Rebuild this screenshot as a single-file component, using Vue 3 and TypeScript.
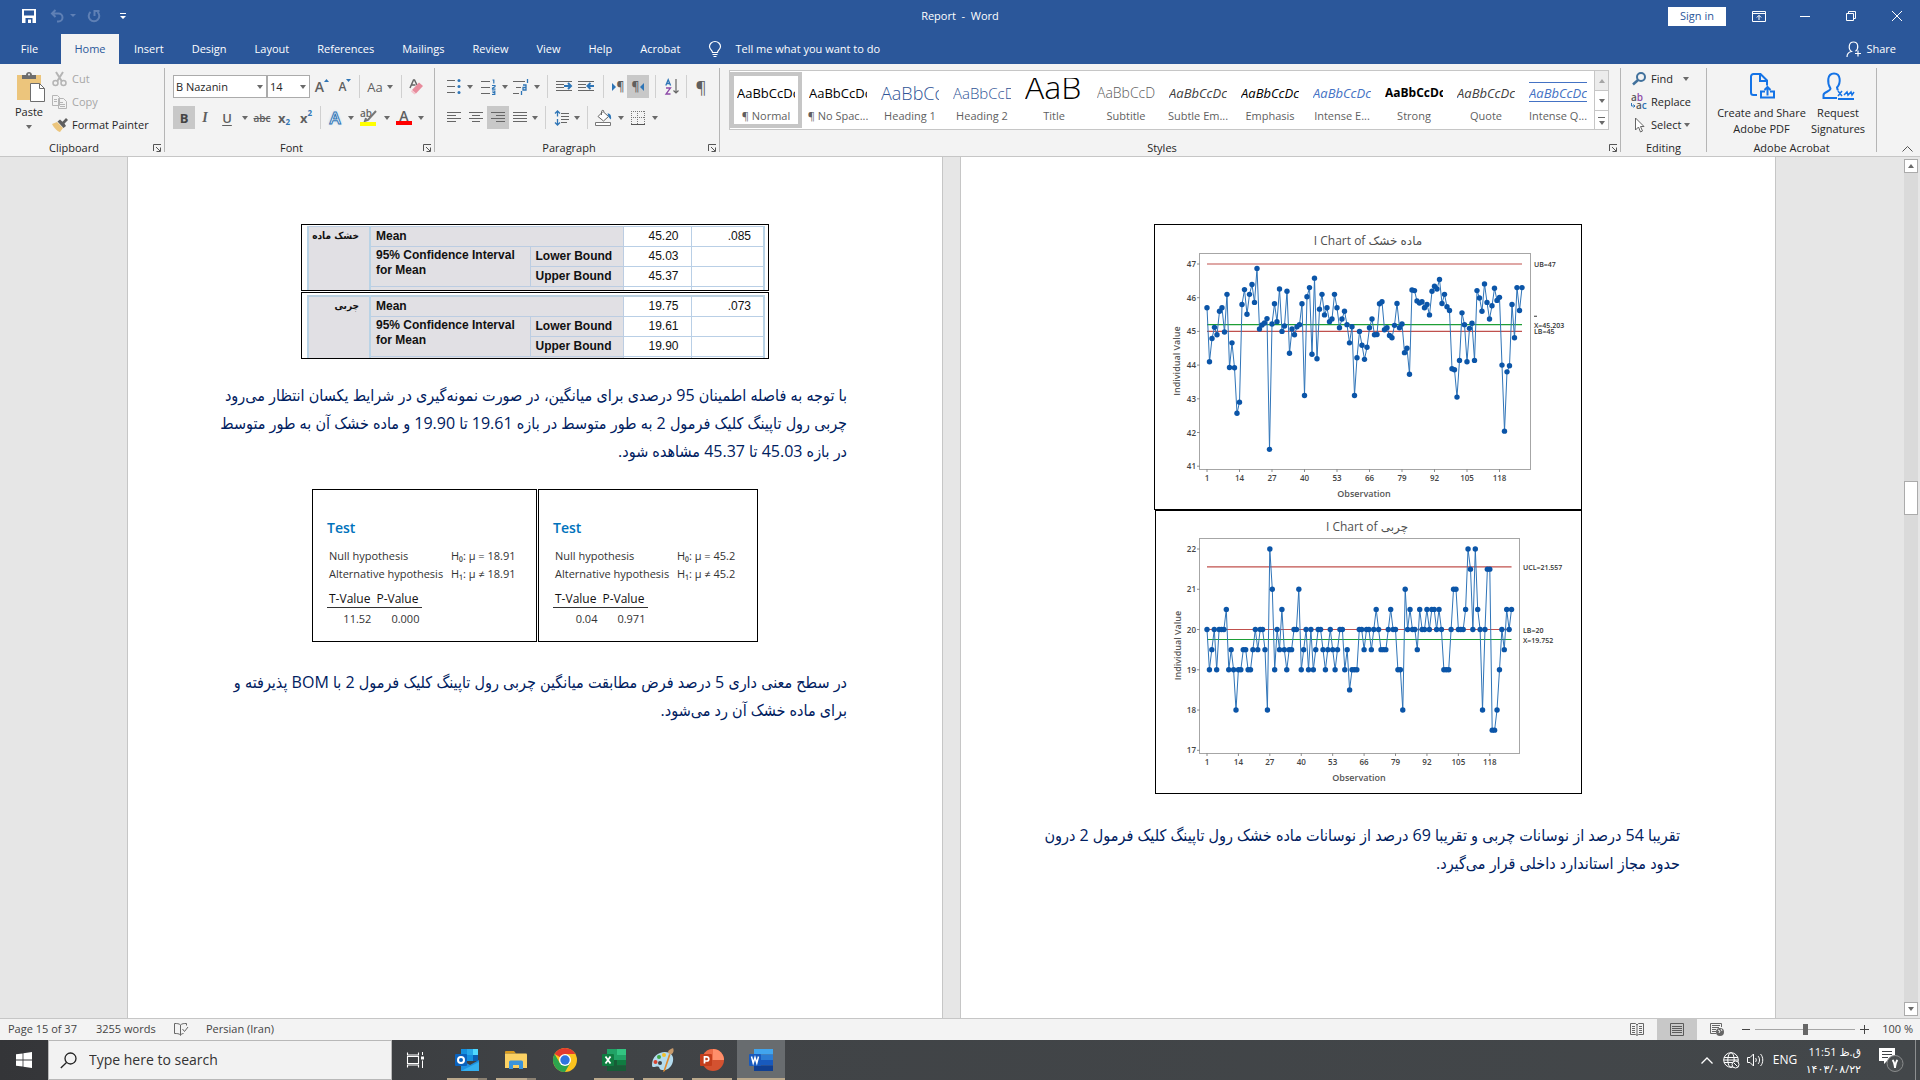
<script setup lang="ts">
interface StyleItem { name: string; cls: string }
interface Chart {
  id: string; title: string; w: number; h: number
  left: number; top: number; right: number; bottom: number
  x0: number; dx: number; yTop: number; dy: number; max: number
  ticks: number[]; titleX: number; obsX: number
  lines: { v: number; color: string; label: string }[]
  xbar: boolean
  data: number[]
}

const tabs = ['Insert', 'Design', 'Layout', 'References', 'Mailings', 'Review', 'View', 'Help', 'Acrobat']

const styleItems: StyleItem[] = [
  { name: '¶ Normal', cls: 'normal' },
  { name: '¶ No Spac...', cls: 'normal' },
  { name: 'Heading 1', cls: 'h1' },
  { name: 'Heading 2', cls: 'h2' },
  { name: 'Title', cls: 'title' },
  { name: 'Subtitle', cls: 'subtitle' },
  { name: 'Subtle Em...', cls: 'subtle' },
  { name: 'Emphasis', cls: 'emphasis' },
  { name: 'Intense E...', cls: 'intense' },
  { name: 'Strong', cls: 'strong' },
  { name: 'Quote', cls: 'subtle' },
  { name: 'Intense Q...', cls: 'intense quote' },
]

const stats = [
  { label: 'خشک ماده', mean: '45.20', err: '.085', lower: '45.03', upper: '45.37' },
  { label: 'چربی', mean: '19.75', err: '.073', lower: '19.61', upper: '19.90' },
]

const tests = [
  { mu: '18.91', t: '11.52', p: '0.000' },
  { mu: '45.2', t: '0.04', p: '0.971' },
]

const intervalText = [
  'با توجه به فاصله اطمینان 95 درصدی برای میانگین، در صورت نمونه‌گیری در شرایط یکسان انتظار می‌رود',
  'چربی رول تاپینگ کلیک فرمول 2 به طور متوسط در بازه 19.61 تا 19.90 و ماده خشک آن به طور متوسط',
  'در بازه 45.03 تا 45.37 مشاهده شود.',
]
const testText = [
  'در سطح معنی داری 5 درصد فرض مطابقت میانگین چربی رول تاپینگ کلیک فرمول 2 با BOM پذیرفته و',
  'برای ماده خشک آن رد می‌شود.',
]
const limitText = [
  'تقریبا 54 درصد از نوسانات چربی و تقریبا 69 درصد از نوسانات ماده خشک رول تاپینگ کلیک فرمول 2 درون',
  'حدود مجاز استاندارد داخلی قرار می‌گیرد.',
]

const xTicks = [1, 14, 27, 40, 53, 66, 79, 92, 105, 118]

const dryMatter = [
  45.7, 44.1, 44.79, 45.12, 44.9, 45.6, 45.7, 44.98, 46.1, 43.93, 44.66, 43.92, 42.57, 42.9, 45.8, 46.24,
  45.51, 46.1, 46.39, 45.86, 46.87, 45.07, 45.19, 45.25, 45.38, 41.5, 45.22, 45.82, 45.29, 46.26, 45.0, 45.16,
  46.19, 44.35, 45.07, 44.9, 45.14, 45.2, 45.82, 43.1, 46.03, 46.3, 44.32, 46.58, 44.19, 45.66, 46.1, 45.49,
  45.7, 45.29, 45.37, 46.1, 45.7, 45.11, 45.37, 45.6, 45.2, 44.66, 45.14, 43.1, 44.22, 45.0, 44.59, 44.17,
  44.53, 45.11, 45.37, 44.9, 44.91, 45.82, 45.88, 45.05, 45.11, 44.88, 44.81, 45.18, 45.83, 45.11, 45.22, 44.37,
  44.5, 43.73, 46.23, 46.21, 45.9, 45.84, 45.88, 45.7, 45.8, 45.49, 46.19, 46.34, 46.26, 46.54, 45.83, 46.1,
  45.73, 45.62, 43.89, 43.86, 43.05, 44.14, 45.55, 45.2, 44.1, 45.09, 45.24, 44.14, 46.21, 45.99, 45.6, 46.41,
  45.86, 45.37, 45.76, 46.28, 45.92, 46.01, 44.0, 42.04, 43.8, 43.98, 45.8, 44.81, 46.3, 45.62, 46.3,
]

const fat = [
  20, 19, 19.5, 20, 19, 20, 20, 20, 20.5, 19, 19.5, 19, 18, 19, 19, 19.5,
  19.5, 19, 19, 19.5, 20, 19.5, 20, 20, 19.5, 18, 22, 21, 19, 20, 19.5, 20.5,
  19.5, 19, 19.5, 19.5, 20, 20, 21, 19, 19.5, 20, 19, 20, 19, 19.5, 20, 20,
  19.5, 19, 19.5, 20, 19.5, 19, 19.5, 20, 20, 19, 19.5, 18.5, 19, 19, 19, 20,
  20, 19.5, 20, 20, 19.5, 20, 20.5, 20, 19.5, 19.5, 19.5, 20, 20.5, 20, 20, 19,
  19, 18, 21, 20, 20.5, 20, 20, 19.5, 20.5, 20, 20, 20.5, 20, 20.5, 20.5, 20,
  20.5, 20, 19, 19, 19, 20, 21, 21, 20, 20, 20, 20.5, 22, 21.5, 20, 22,
  20.5, 20, 18, 20, 21.5, 21.5, 17.5, 17.5, 18, 19, 20, 19.5, 20.5, 20, 20.5,
]

const charts: Chart[] = [
  {
    id: 'dry', title: 'I Chart of ماده خشک', w: 426, h: 284,
    left: 44, top: 28, right: 375, bottom: 244,
    x0: 52, dx: 2.5, yTop: 39, dy: 33.7, max: 47,
    ticks: [47, 46, 45, 44, 43, 42, 41], titleX: 213, obsX: 209,
    lines: [
      { v: 47, color: '#c0504d', label: 'UB=47' },
      { v: 45.203, color: '#1e9e36', label: 'X=45.203' },
      { v: 45, color: '#c0504d', label: 'LB=45' },
    ],
    xbar: true, data: dryMatter,
  },
  {
    id: 'fat', title: 'I Chart of چربی', w: 425, h: 282,
    left: 43, top: 27, right: 363, bottom: 242,
    x0: 51, dx: 2.417, yTop: 38, dy: 40.26, max: 22,
    ticks: [22, 21, 20, 19, 18, 17], titleX: 211, obsX: 203,
    lines: [
      { v: 21.557, color: '#c0504d', label: 'UCL=21.557' },
      { v: 20, color: '#c0504d', label: 'LB=20' },
      { v: 19.752, color: '#1e9e36', label: 'X=19.752' },
    ],
    xbar: false, data: fat,
  },
]

const px = (c: Chart, obs: number): number => c.x0 + (obs - 1) * c.dx
const py = (c: Chart, v: number): number => c.yTop + (c.max - v) * c.dy
const points = (c: Chart): string =>
  c.data.map((v, i) => `${px(c, i + 1).toFixed(1)},${py(c, v).toFixed(1)}`).join(' ')
</script>

<template>
  <div class="window">
    <header class="titlebar">
      <div class="qat">
        <button class="q-save" aria-label="Save">
          <svg width="14" height="14" viewBox="0 0 14 14"><path d="M0 0h14v14H0z" fill="#fff" /><path d="M2 1.500h10v5H2zM3.500 9h7v5h-7z" fill="#2b579a" /><path d="M6 10.500h3V14H6z" fill="#fff" /></svg>
        </button>
        <button class="q-undo" aria-label="Undo">
          <svg width="26" height="14" viewBox="0 0 26 14"><path d="M5.500 1L2 4.500 5.500 8M2 4.500h6.500a4 4 0 0 1 0 8H7" fill="none" stroke="#5f80b5" stroke-width="2" /><path d="M20 5h6l-3 3z" fill="#5f80b5" /></svg>
        </button>
        <button class="q-redo" aria-label="Repeat">
          <svg width="14" height="14" viewBox="0 0 14 14"><path d="M3.500 3A5.300 5.300 0 1 0 10.500 3M7.500 7V2h5" fill="none" stroke="#5f80b5" stroke-width="2" /></svg>
        </button>
        <button class="q-more" aria-label="Customize Quick Access Toolbar">
          <svg width="6" height="7" viewBox="0 0 6 7"><path d="M0 0h6v1H0zM0 3h6L3 6z" fill="#fff" /></svg>
        </button>
      </div>
      <div class="doc-title">Report&nbsp; -&nbsp; Word</div>
      <div class="win-tools">
        <button class="signin">Sign in</button>
        <button class="win-btn" aria-label="Ribbon Display Options">
          <svg width="14" height="11" viewBox="0 0 14 11"><path d="M.5.5h13v10H.5zM.5 2.500h13M7 9V4.500M4.800 6.500L7 4.300l2.200 2.200" fill="none" stroke="#fff" /></svg>
        </button>
        <button class="win-btn" aria-label="Minimize">
          <svg width="10" height="10" viewBox="0 0 10 10"><path d="M0 5.500h10" stroke="#fff" /></svg>
        </button>
        <button class="win-btn" aria-label="Restore">
          <svg width="10" height="10" viewBox="0 0 10 10"><path d="M.5 2.500h7v7h-7zM2.500 2.500v-2h7v7h-2" fill="none" stroke="#fff" /></svg>
        </button>
        <button class="win-btn" aria-label="Close">
          <svg width="10" height="10" viewBox="0 0 10 10"><path d="M0 0l10 10M10 0L0 10" stroke="#fff" /></svg>
        </button>
      </div>
    </header>

    <nav class="tabs">
      <button class="tab file">File</button>
      <button class="tab active">Home</button>
      <button v-for="t in tabs" :key="t" class="tab">{{ t }}</button>
      <button class="tab tell">
        <svg width="12" height="16" viewBox="0 0 12 16"><path d="M3.500 11.500C3.500 9 .5 8.500.5 5.500a5.500 5 0 0 1 11 0c0 3-3 3.500-3 6zM3.500 13.500h5M4.500 15.500h3" fill="none" stroke="#fff" stroke-width="1.200" /></svg>
        <span>Tell me what you want to do</span>
      </button>
      <button class="share">
        <svg width="16" height="17" viewBox="0 0 16 17"><path d="M1 16c0-4 2-5 4.500-5.500C2 8 2.500 1 7.500 1S13 7.500 9.500 10.200M12 9.500v6M9 12.500h6" fill="none" stroke="#fff" stroke-width="1.200" /></svg>
        <span>Share</span>
      </button>
    </nav>

    <section class="ribbon">
      <div class="group clipboard">
        <div class="group-body">
          <button class="paste">
            <svg width="28" height="30" viewBox="0 0 28 30"><path d="M0 3h24v25H0z" fill="#ecc57c" /><path d="M5 7V3h4c0-4 6-4 6 0h4v4z" fill="#6d6d6d" /><circle cx="12" cy="2.500" r="1" fill="#f3f3f3" /><path d="M13.500 11.500h9l5 5v13h-14z" fill="#fff" stroke="#6d6d6d" /><path d="M22.500 11.500v5h5" fill="none" stroke="#6d6d6d" /></svg>
            <span>Paste</span>
            <i class="caret"></i>
          </button>
          <div class="small-col">
            <button class="small off">
              <svg width="16" height="16" viewBox="0 0 16 16"><path d="M4 1l6 9.500M11 1L5 10.500" stroke="#b5b5b5" stroke-width="2" /><circle cx="3.500" cy="12" r="2.500" fill="none" stroke="#b5b5b5" stroke-width="1.500" /><circle cx="11.500" cy="12" r="2.500" fill="none" stroke="#b5b5b5" stroke-width="1.500" /></svg>
              <span>Cut</span>
            </button>
            <button class="small off">
              <svg width="16" height="16" viewBox="0 0 16 16"><path d="M.5 1.500h5l2 2v8h-7zM6.500 4.500h5l3 3v7h-8z" fill="#f3f3f3" stroke="#b5b5b5" /><path d="M2 5.500h3M2 7.500h3M8 8.500h3M8 10.500h5M8 12.500h5" stroke="#b5b5b5" /></svg>
              <span>Copy</span>
            </button>
            <button class="small">
              <svg width="16" height="16" viewBox="0 0 16 16"><path d="M0 7l5-2 6 6-3 4c-2 0-6-4-8-8z" fill="#ecc57c" /><path d="M5.500 4.500L8 2.500l2.500 2.300L14 1l2 2-3.500 3.500L14 9l-2.500 2z" fill="#5f5f5f" /></svg>
              <span>Format Painter</span>
            </button>
          </div>
        </div>
        <div class="group-foot"><span>Clipboard</span><button class="launch" aria-label="Clipboard settings"><svg width="8" height="8" viewBox="0 0 8 8"><path d="M.5 7V.5H8M3 3l4 4M7.500 3.500v4h-4" fill="none" stroke="#555" /></svg></button></div>
      </div>
      <div class="rule"></div>

      <div class="group font">
        <div class="group-body stack">
          <div class="tool-row">
            <label class="combo name"><select aria-label="Font"><option>B Nazanin</option></select><i class="caret"></i></label>
            <label class="combo size"><select aria-label="Font size"><option>14</option></select><i class="caret"></i></label>
            <button class="t w24 grow">A<svg width="5" height="3" viewBox="0 0 5 3"><path d="M0 3l2.500-3L5 3z" fill="#2e75b6" /></svg></button>
            <button class="t w22 shrink">A<svg width="5" height="3" viewBox="0 0 5 3"><path d="M0 0h5L2.500 3z" fill="#2e75b6" /></svg></button>
            <i class="vsep"></i>
            <button class="t w36 case">Aa<i class="caret"></i></button>
            <i class="vsep"></i>
            <button class="t w26" aria-label="Clear formatting">
              <svg width="16" height="16" viewBox="0 0 16 16"><path d="M1 9L4.500 1h1L8 6M2.500 6h4" fill="none" stroke="#666" stroke-width="1.500" /><path d="M10 3.500l4 3.500-7 7.500-4-3.500z" fill="#e88b9c" /><path d="M3 11l4 3.500-1.500 1-3.500-3z" fill="#f4c2cb" /></svg>
            </button>
          </div>
          <div class="tool-row">
            <button class="t w22 on bold">B</button>
            <button class="t w20 ital">I</button>
            <button class="t w24 under">U</button>
            <button class="t w12" aria-label="Underline style"><i class="caret"></i></button>
            <button class="t w22 strike">abc</button>
            <button class="t w22 subs">x<sub>2</sub></button>
            <button class="t w22 subs">x<sup>2</sup></button>
            <i class="vsep"></i>
            <button class="t w24 effect">A</button><button class="t w8" aria-label="Text effects menu"><i class="caret"></i></button>
            <button class="t w28" aria-label="Text highlight color">
              <svg width="18" height="17" viewBox="0 0 18 17"><text x="0" y="8" font-size="10" font-weight="600" fill="#666" font-family="Open Sans, sans-serif">ab</text><path d="M16 2L8 11l-3 1 1-3" fill="none" stroke="#777" stroke-width="2" /><path d="M0 13h16v4H0z" fill="#ff0" /></svg>
            </button><button class="t w8" aria-label="Highlight menu"><i class="caret"></i></button>
            <button class="t w26 colour">A</button><button class="t w8" aria-label="Font color menu"><i class="caret"></i></button>
          </div>
        </div>
        <div class="group-foot"><span>Font</span><button class="launch" aria-label="Font settings"><svg width="8" height="8" viewBox="0 0 8 8"><path d="M.5 7V.5H8M3 3l4 4M7.500 3.500v4h-4" fill="none" stroke="#555" /></svg></button></div>
      </div>
      <div class="rule"></div>

      <div class="group para">
        <div class="group-body stack">
          <div class="tool-row">
            <button class="t w22" aria-label="Bullets"><svg width="14" height="15" viewBox="0 0 14 15"><path d="M0 1.500h8M0 7.500h8M0 13.500h8" stroke="#666" /><g fill="#2e75b6"><circle cx="12" cy="1.500" r="1.500" /><circle cx="12" cy="7.500" r="1.500" /><circle cx="12" cy="13.500" r="1.500" /></g></svg></button>
            <button class="t w10" aria-label="Bullets menu"><i class="caret"></i></button>
            <button class="t w26" aria-label="Numbering"><svg width="15" height="16" viewBox="0 0 15 16"><path d="M0 2.500h9M0 8.500h9M0 14.500h9" stroke="#666" /><g fill="none" stroke="#2e75b6" stroke-width="1.200"><path d="M11.500 1h1.300v3.500M11 6.500h3v1.200l-2.500 1.500v1h3M11 12h2.800v3.500H11M11.500 13.700h2" /></g></svg></button>
            <button class="t w8" aria-label="Numbering menu"><i class="caret"></i></button>
            <button class="t w24" aria-label="Multilevel list"><svg width="16" height="16" viewBox="0 0 16 16"><path d="M0 2.500h12M3 8.500h5M0 14.500h6" stroke="#666" /><g fill="none" stroke="#2e75b6" stroke-width="1.300"><path d="M14.500 0v4M10 6h3v5h-3V8.500h3M8.500 12v4" /></g></svg></button>
            <button class="t w8" aria-label="Multilevel menu"><i class="caret"></i></button>
            <i class="vsep wide"></i>
            <button class="t w22" aria-label="Decrease indent"><svg width="16" height="11" viewBox="0 0 16 11"><path d="M0 .5h16M0 3.500h8M0 6.500h8M0 9.500h16" stroke="#666" /><path d="M8 5h7M12 2l3 3-3 3" fill="none" stroke="#2e75b6" stroke-width="2" /></svg></button>
            <button class="t w22" aria-label="Increase indent"><svg width="16" height="12" viewBox="0 0 16 12"><path d="M0 .5h16M0 3.500h8M0 6.500h8M0 9.500h16" stroke="#666" /><path d="M16 5h-6M12.500 2l-3 3 3 3" fill="none" stroke="#2e75b6" stroke-width="2" /></svg></button>
            <i class="vsep wide"></i>
            <button class="t w18 pil" aria-label="Left-to-right"><svg width="4" height="8" viewBox="0 0 4 8"><path d="M0 0l4 4-4 4z" fill="#2e75b6" /></svg>¶</button>
            <button class="t w22 on pil" aria-label="Right-to-left">¶<svg width="4" height="8" viewBox="0 0 4 8"><path d="M4 0L0 4l4 4z" fill="#2e75b6" /></svg></button>
            <i class="vsep wide"></i>
            <button class="t w22" aria-label="Sort"><svg width="15" height="16" viewBox="0 0 15 16"><path d="M.8 6.500L3.200.800l2.400 5.700M1.500 4.500h3.400" fill="none" stroke="#2e75b6" stroke-width="1.300" /><path d="M1 9h4.500L1 15h4.500" fill="none" stroke="#8e4ba8" stroke-width="1.300" /><path d="M11 0v14M8.500 11.500L11 14l2.500-2.500" fill="none" stroke="#666" stroke-width="1.200" /></svg></button>
            <i class="vsep"></i>
            <button class="t w24 pilcrow" aria-label="Show formatting marks">¶</button>
          </div>
          <div class="tool-row">
            <button class="t w22" aria-label="Align left"><svg width="14" height="11" viewBox="0 0 14 11"><path d="M0 .5h14M0 3.500h9M0 6.500h14M0 9.500h9" stroke="#666" /></svg></button>
            <button class="t w22" aria-label="Center"><svg width="14" height="11" viewBox="0 0 14 11"><path d="M0 .5h14M3 3.500h8M0 6.500h14M3 9.500h8" stroke="#666" /></svg></button>
            <button class="t w22 on" aria-label="Align right"><svg width="14" height="11" viewBox="0 0 14 11"><path d="M0 .5h14M5 3.500h9M0 6.500h14M5 9.500h9" stroke="#666" /></svg></button>
            <button class="t w22" aria-label="Justify"><svg width="14" height="11" viewBox="0 0 14 11"><path d="M0 .5h14M0 3.500h14M0 6.500h14M0 9.500h14" stroke="#666" /></svg></button>
            <button class="t w8" aria-label="Justify menu"><i class="caret"></i></button>
            <i class="vsep wide"></i>
            <button class="t w22" aria-label="Line spacing"><svg width="14" height="16" viewBox="0 0 14 16"><path d="M6 3.500h8M6 6.500h8M6 9.500h8M6 12.500h6" stroke="#666" /><path d="M2.500 1v5.500M0 3.500L2.500 1 5 3.500M2.500 9v6M0 12.500L2.500 15 5 12.500" fill="none" stroke="#2e75b6" stroke-width="1.300" /></svg></button>
            <button class="t w8" aria-label="Line spacing menu"><i class="caret"></i></button>
            <i class="vsep wide"></i>
            <button class="t w22" aria-label="Shading"><svg width="18" height="16" viewBox="0 0 18 16"><path d="M3 6.500l5-5 5.500 5-5 4.500zM6.500 5V1.500C6.500 0 9 0 9 1.500" fill="#fff" stroke="#666" /><path d="M12.500 3.500c2.500 0 4 1.500 3.500 6-1.500-1-2-2-2.500-3z" fill="#2e75b6" /><path d="M.5 12.500h15v3H.5z" fill="#fff" stroke="#777" /></svg></button>
            <button class="t w12" aria-label="Shading menu"><i class="caret"></i></button>
            <button class="t w22" aria-label="Borders"><svg width="14" height="14" viewBox="0 0 14 14"><path d="M0 .5h14M.5 0v13M13.500 0v13M6.500 0v13M0 6.500h14" stroke="#777" stroke-dasharray="1 1" /><path d="M0 13.500h14" stroke="#555" /></svg></button>
            <button class="t w12" aria-label="Borders menu"><i class="caret"></i></button>
          </div>
        </div>
        <div class="group-foot"><span>Paragraph</span><button class="launch" aria-label="Paragraph settings"><svg width="8" height="8" viewBox="0 0 8 8"><path d="M.5 7V.5H8M3 3l4 4M7.500 3.500v4h-4" fill="none" stroke="#555" /></svg></button></div>
      </div>
      <div class="rule"></div>

      <div class="group styles">
        <div class="group-body">
          <div class="gallery">
            <button v-for="(s, i) in styleItems" :key="s.name" class="style-item" :class="{ picked: i === 0 }">
              <span class="sample" :class="s.cls">AaBbCcDc</span>
              <span class="style-name">{{ s.name }}</span>
            </button>
            <div class="gallery-nav">
              <button class="dim" aria-label="Previous styles"><i class="caret up"></i></button>
              <button aria-label="Next styles"><i class="caret"></i></button>
              <button class="more" aria-label="More styles"><i class="caret"></i></button>
            </div>
          </div>
        </div>
        <div class="group-foot"><span>Styles</span><button class="launch" aria-label="Styles settings"><svg width="8" height="8" viewBox="0 0 8 8"><path d="M.5 7V.5H8M3 3l4 4M7.500 3.500v4h-4" fill="none" stroke="#555" /></svg></button></div>
      </div>
      <div class="rule"></div>

      <div class="group editing">
        <div class="group-body">
          <div class="small-col">
            <button class="small">
              <svg width="16" height="14" viewBox="0 0 16 14"><circle cx="10" cy="5" r="4" fill="none" stroke="#41719c" stroke-width="2" /><path d="M7 8l-5 4.500" stroke="#41719c" stroke-width="2.500" /></svg>
              <span>Find</span><i class="caret far"></i>
            </button>
            <button class="small">
              <svg width="16" height="16" viewBox="0 0 16 16"><text x="0" y="7" font-size="10" font-weight="600" font-family="Open Sans, sans-serif" fill="#555">a<tspan fill="#8e4ba8">b</tspan></text><text x="5" y="15" font-size="10" font-weight="600" font-family="Open Sans, sans-serif" fill="#555">a<tspan fill="#2e75b6">c</tspan></text><path d="M.5 9v3H4M2.500 10.500L4 12l-1.500 1.500" fill="none" stroke="#2e75b6" /></svg>
              <span>Replace</span>
            </button>
            <button class="small">
              <svg width="16" height="16" viewBox="0 0 16 16"><path d="M4.500 1v12l3-3 2 5 2-1-2-4.500h3.500z" fill="#fff" stroke="#666" /></svg>
              <span>Select</span><i class="caret near"></i>
            </button>
          </div>
        </div>
        <div class="group-foot"><span>Editing</span></div>
      </div>
      <div class="rule"></div>

      <div class="group adobe">
        <div class="group-body">
          <button class="big create">
            <svg width="26" height="27" viewBox="0 0 26 27"><path d="M8 22.500H4.500a2.500 2.500 0 0 1-2.500-2.500V4a2.500 2.500 0 0 1 2.500-2.500h7L18 8v5M11 2v6.500h7M16 19h-4v6h13v-6h-4M18.500 23V15M15.500 17.500l3-3 3 3" fill="none" stroke="#1473e6" stroke-width="2" /></svg>
            <span>Create and Share<br>Adobe PDF</span>
          </button>
          <button class="big request">
            <svg width="32" height="28" viewBox="0 0 32 28"><path d="M15 26H1.500v-3c0-3 7-3.500 7-6.500C5 11 5 1.500 12 1.500S19 11 15 15.500c0 1 0 2 1.500 2.500M16 27h16" fill="none" stroke="#1473e6" stroke-width="2" /><path d="M16 19l4 5M20 19l-4 5M22 23l3-3 1 3 3-3 1 3 2-3" fill="none" stroke="#1473e6" stroke-width="1.500" /></svg>
            <span>Request<br>Signatures</span>
          </button>
        </div>
        <div class="group-foot"><span>Adobe Acrobat</span></div>
      </div>
      <div class="rule"></div>
      <button class="collapse" aria-label="Collapse the Ribbon"><svg width="11" height="6" viewBox="0 0 11 6"><path d="M.5 5.500l5-5 5 5" fill="none" stroke="#555" /></svg></button>
    </section>

    <main class="workspace">
      <div class="pages">
        <article class="page">
          <div v-for="(s, i) in stats" :key="s.label" class="stat-frame" :class="{ second: i === 1 }">
            <table class="stat">
              <colgroup><col class="c1"><col class="c2"><col class="c3"><col class="c4"><col class="c5"></colgroup>
              <tbody>
                <tr>
                  <th rowspan="4" class="var" dir="rtl">{{ s.label }}</th>
                  <th colspan="2">Mean</th>
                  <td>{{ s.mean }}</td>
                  <td class="err">{{ s.err }}</td>
                </tr>
                <tr><th rowspan="2" class="ci">95% Confidence Interval<br>for Mean</th><th>Lower Bound</th><td>{{ s.lower }}</td><td></td></tr>
                <tr><th>Upper Bound</th><td>{{ s.upper }}</td><td></td></tr>
                <tr class="sliver"><th colspan="2"></th><td></td><td></td></tr>
              </tbody>
            </table>
          </div>
          <p class="fa first" dir="rtl">
            <span v-for="line in intervalText" :key="line" class="line">{{ line }}</span>
          </p>
          <div class="tests">
            <section v-for="t in tests" :key="t.mu" class="test">
              <h2>Test</h2>
              <dl>
                <dt>Null hypothesis</dt><dd>H₀: μ = {{ t.mu }}</dd>
                <dt>Alternative hypothesis</dt><dd>H₁: μ ≠ {{ t.mu }}</dd>
              </dl>
              <table class="tp">
                <thead><tr><th>T-Value</th><th>P-Value</th></tr></thead>
                <tbody><tr><td>{{ t.t }}</td><td>{{ t.p }}</td></tr></tbody>
              </table>
            </section>
          </div>
          <p class="fa after" dir="rtl">
            <span v-for="line in testText" :key="line" class="line">{{ line }}</span>
          </p>
        </article>

        <article class="page">
          <figure v-for="c in charts" :key="c.id" class="chart" :class="c.id">
            <svg :viewBox="`0 0 ${c.w} ${c.h}`">
              <text :x="c.titleX" y="20" class="c-title" text-anchor="middle">{{ c.title }}</text>
              <rect :x="c.left + 0.5" :y="c.top + 0.5" :width="c.right - c.left" :height="c.bottom - c.top" fill="none" stroke="#a6a6a6" />
              <g v-for="v in c.ticks" :key="v">
                <path :d="`M${c.left - 2} ${py(c, v)}h3`" stroke="#8c8c8c" />
                <text :x="c.left - 3" :y="py(c, v) + 3" class="c-tick" text-anchor="end">{{ v }}</text>
              </g>
              <g v-for="x in xTicks" :key="x">
                <path :d="`M${px(c, x)} ${c.bottom}v3`" stroke="#8c8c8c" />
                <text :x="px(c, x)" :y="c.bottom + 12" class="c-tick" text-anchor="middle">{{ x }}</text>
              </g>
              <g v-for="l in c.lines" :key="l.label">
                <path :d="`M${c.x0} ${py(c, l.v)}H${px(c, 127)}`" :stroke="l.color" stroke-width="1.200" />
                <text :x="c.right + 4" :y="py(c, l.v) + 3" class="c-ref">{{ l.label }}</text>
              </g>
              <path v-if="c.xbar" :d="`M${c.right + 4} ${py(c, 45.45)}h3`" stroke="#333" />
              <polyline :points="points(c)" fill="none" stroke="#2f74b8" stroke-width="1" />
              <circle v-for="(v, i) in c.data" :key="i" :cx="px(c, i + 1)" :cy="py(c, v)" r="2.700" fill="#0b55a8" />
              <text :x="c.obsX" :y="c.bottom + 28" class="c-axis" text-anchor="middle">Observation</text>
              <text :transform="`translate(25 ${(c.top + c.bottom) / 2}) rotate(-90)`" class="c-axis" text-anchor="middle">Individual Value</text>
            </svg>
          </figure>
          <p class="fa last" dir="rtl">
            <span v-for="line in limitText" :key="line" class="line">{{ line }}</span>
          </p>
        </article>
      </div>
      <div class="scroll">
        <button aria-label="Scroll up"><i class="caret up"></i></button>
        <div class="track"><div class="thumb"></div></div>
        <button aria-label="Scroll down"><i class="caret"></i></button>
      </div>
    </main>

    <footer class="status">
      <span class="s-page">Page 15 of 37</span>
      <span class="s-words">3255 words</span>
      <svg class="s-proof" width="15" height="13" viewBox="0 0 15 13"><path d="M6.500 2C5 .5 3 .5.5.5v10c2.500 0 4.500 0 6 1.500M6.500 2C8 .5 10 .5 12.500.5v2M6.500 2v10.500M6.500 12c1-1 2-1.500 3-1.500M8.500 6l2 2.500L14 4" fill="none" stroke="#666" /></svg>
      <span>Persian (Iran)</span>
      <div class="views">
        <button aria-label="Read Mode"><svg width="14" height="13" viewBox="0 0 14 13"><path d="M7 2L5.500.5h-5v11h5L7 12.500 8.500 11.500h5V.5h-5zM7 2v10M2 3.500h3M2 5.500h3M2 7.500h3M2 9.500h3M9 3.500h3M9 5.500h3M9 7.500h3M9 9.500h3" fill="none" stroke="#666" /></svg></button>
        <button class="sel" aria-label="Print Layout"><svg width="14" height="13" viewBox="0 0 14 13"><path d="M.5.5h13v12H.5zM2 3.500h10M2 5.500h10M2 7.500h10M2 9.500h10" fill="none" stroke="#5a5a5a" /></svg></button>
        <button aria-label="Web Layout"><svg width="14" height="13" viewBox="0 0 14 13"><path d="M6 10.500H.5V.5h11V4M2 2.500h8M2 4.500h7M2 6.500h4M2 8.500h4" fill="none" stroke="#666" /><circle cx="10" cy="9" r="4" fill="#666" /><path d="M8 7l2 1-1 2M11 6l1 2" fill="none" stroke="#f3f3f3" /></svg></button>
      </div>
      <button class="zoom-btn minus" aria-label="Zoom out"><svg width="8" height="9" viewBox="0 0 8 9"><path d="M0 4.500h8" stroke="#444" /></svg></button>
      <input class="zoom" type="range" min="0" max="100" value="50" aria-label="Zoom">
      <button class="zoom-btn plus" aria-label="Zoom in"><svg width="9" height="9" viewBox="0 0 9 9"><path d="M0 4.500h9M4.500 0v9" stroke="#444" /></svg></button>
      <span class="pct">100 %</span>
    </footer>

    <div class="taskbar">
      <button class="start" aria-label="Start"><svg width="16" height="16" viewBox="0 0 16 16"><path d="M0 2.300L6.600 1.400v6.200H0zM7.400 1.300L16 0v7.600H7.400zM0 8.400h6.600v6.200L0 13.700zM7.400 8.400H16V16l-8.600-1.300z" fill="#fff" /></svg></button>
      <label class="search">
        <svg width="17" height="17" viewBox="0 0 17 17"><circle cx="10.500" cy="6.500" r="5.500" fill="none" stroke="#222" stroke-width="1.300" /><path d="M6.500 10.500L.8 16" stroke="#222" stroke-width="1.300" /></svg>
        <input type="text" placeholder="Type here to search" aria-label="Type here to search">
      </label>
      <button class="app view" aria-label="Task View"><svg width="17" height="16" viewBox="0 0 17 16"><path d="M.5.5v2.500h11V.5M.5 4.500h11v7H.5zM.5 15.500V13h11v2.500" fill="none" stroke="#fff" stroke-width="1.100" /><path d="M15.500 0v3M15.500 8.500V16" stroke="#fff" /><path d="M14 4.500h3v3h-3z" fill="#fff" /></svg></button>
      <button class="app open multi" aria-label="Outlook"><svg width="24" height="22" viewBox="0 0 24 22"><path d="M6 0h17v12H6z" fill="#0a5fb4" /><path d="M6 0h6v6H6zM12 6h6v6h-6z" fill="#1490df" /><path d="M12 0h6v6h-6z" fill="#28a8ea" /><path d="M18 0h5v6h-5z" fill="#50d9ff" /><path d="M6 11l9 5 9-5v11H6z" fill="#1e90e0" /><path d="M6 22l18-9v9z" fill="#35b0f0" /><rect y="5" width="12" height="12" rx="1" fill="#0a62bd" /><circle cx="6" cy="11" r="3" fill="none" stroke="#fff" stroke-width="2" /></svg></button>
      <button class="app open multi" aria-label="File Explorer"><svg width="22" height="18" viewBox="0 0 22 18"><path d="M0 1a1 1 0 0 1 1-1h8l2 2.500H0z" fill="#d99a1c" /><path d="M0 2.500h21a1 1 0 0 1 1 1V17H0z" fill="#fbd163" /><path d="M4 18v-7a1.500 1.500 0 0 1 1.500-1.500h11A1.500 1.500 0 0 1 18 11v7h-4v-4H8v4z" fill="#3a94dc" /></svg></button>
      <button class="app" aria-label="Chrome"><svg width="24" height="24" viewBox="0 0 24 24"><circle cx="12" cy="12" r="12" fill="#fcc31e" /><path d="M12 12L1.600 6A12 12 0 0 1 22.400 6H12z" fill="#e33b2e" /><path d="M1.600 6A12 12 0 0 0 12 24l5.200-9L12 12 6.800 15z" fill="#2da44e" /><circle cx="12" cy="12" r="6" fill="#fff" /><circle cx="12" cy="12" r="4.700" fill="#2f74e0" /></svg></button>
      <button class="app open" aria-label="Excel"><svg width="24" height="22" viewBox="0 0 24 22"><path d="M5 0h10v11H5z" fill="#21a366" /><path d="M15 0h9v6h-9z" fill="#33c481" /><path d="M15 6h9v5h-9z" fill="#21a366" /><path d="M5 11h10v11H5z" fill="#185c37" /><path d="M15 11h9v5.500h-9z" fill="#107c41" /><path d="M15 16.500h9V22h-9z" fill="#185c37" /><rect y="5" width="12" height="12" rx="1" fill="#107c41" /><path d="M3.500 7.500l5 7M8.500 7.500l-5 7" stroke="#fff" stroke-width="1.800" /></svg></button>
      <button class="app open" aria-label="Paint"><svg width="24" height="24" viewBox="0 0 24 24"><path d="M1 17C1 9 7 4 14 4c6 0 9 4 8 9-1 6-6 10-11 9-3 0-2-3-4-3.500S1 21 1 17z" fill="#b4dbee" /><circle cx="4.500" cy="14" r="2" fill="#d8432f" /><circle cx="8" cy="9" r="2" fill="#3fa845" /><circle cx="13" cy="7" r="2" fill="#f2c12e" /><circle cx="9" cy="15" r="2" fill="#3e4347" /><path d="M18 6l1.500.800L14 23l-2 1z" fill="#e08a2c" /><path d="M17 5c0-3 3-4 5-5 1 2 1 5-2 6.500z" fill="#c79a6b" /></svg></button>
      <button class="app open" aria-label="PowerPoint"><svg width="24" height="22" viewBox="0 0 24 22"><circle cx="13" cy="11" r="11" fill="#d35230" /><path d="M13 0a11 11 0 0 1 11 11H13z" fill="#ff8f6b" /><path d="M13 0v11H2A11 11 0 0 1 13 0z" fill="#ed6c47" /><rect y="5" width="12" height="12" rx="1" fill="#c43e1c" /><path d="M4.500 14.500V7.800h2.200a2 2 0 0 1 0 4.200H4.500" fill="none" stroke="#fff" stroke-width="1.700" /></svg></button>
      <button class="app open current" aria-label="Word"><svg width="24" height="22" viewBox="0 0 24 22"><path d="M5 0h19v5.500H5z" fill="#41a5ee" /><path d="M5 5.500h19V11H5z" fill="#2b7cd3" /><path d="M5 11h19v5.500H5z" fill="#185abd" /><path d="M5 16.500h19V22H5z" fill="#103f91" /><rect y="5" width="12" height="12" rx="1" fill="#185abd" /><path d="M2.500 7.500l1.700 6.500L6 8.500 7.800 14l1.700-6.500" fill="none" stroke="#fff" stroke-width="1.500" /></svg></button>
      <div class="tray">
        <button aria-label="Show hidden icons"><svg width="12" height="7" viewBox="0 0 12 7"><path d="M.5 6.500L6 1l5.500 5.500" fill="none" stroke="#fff" stroke-width="1.300" /></svg></button>
        <button aria-label="Network"><svg width="17" height="17" viewBox="0 0 17 17"><g fill="none" stroke="#fff"><circle cx="8" cy="8" r="7.300" /><ellipse cx="8" cy="8" rx="3.200" ry="7.300" /><path d="M1 5.500h14M1 10.500h14M.7 8h14.600" /></g><circle cx="12.500" cy="12.500" r="3.500" fill="#404447" stroke="#fff" /><path d="M10.500 10.500l4 4" stroke="#fff" /></svg></button>
        <button aria-label="Volume"><svg width="17" height="14" viewBox="0 0 17 14"><path d="M.5 4.500H3L6.500 1v12L3 9.500H.5zM8.500 5c1 1 1 3 0 4M11 3c2 2 2 6 0 8M13.500 1c3 3 3 9 0 12" fill="none" stroke="#fff" /></svg></button>
        <button class="lang">ENG</button>
        <button class="clock"><span dir="rtl">ق.ظ 11:51</span><span>۱۴۰۳/۰۸/۲۲</span></button>
        <button class="notes" aria-label="7 notifications"><svg width="24" height="24" viewBox="0 0 24 24"><path d="M0 0h16v13H8l-3 3v-3H0z" fill="#fff" /><path d="M3 3.500h10M3 6.500h10M3 9.500h6" stroke="#404447" /><circle cx="16" cy="15.500" r="8" fill="#4a4e50" stroke="#8b8d8e" /><path d="M13.500 12c1 1 2 4 2.500 8 .5-4 1.500-7 2.500-8" fill="none" stroke="#fff" stroke-width="1.800" /></svg></button>
        <i class="peek"></i>
      </div>
    </div>
  </div>
</template>

<style>
html, body { height: 100%; margin: 0; overflow: hidden; }
#app { height: 100%; }
</style>

<style scoped>
* { box-sizing: border-box; }
.window { height: 100vh; display: flex; flex-direction: column; font-family: "Open Sans", "DejaVu Sans", sans-serif; font-size: 11px; line-height: 16px; color: #262626; background: #e6e6e6; }
button { border: 0; padding: 0; margin: 0; background: none; font: inherit; color: inherit; display: flex; align-items: center; justify-content: center; flex: none; white-space: nowrap; }
svg { display: block; flex: none; overflow: visible; }
.caret { display: block; flex: none; width: 0; height: 0; border: 3px solid transparent; border-top: 4px solid #6a6a6a; border-bottom: 0; }
.caret.up { border-top: 0; border-bottom: 4px solid #6a6a6a; }

.titlebar { height: 34px; flex: none; background: #2b579a; color: #fff; display: grid; grid-template-columns: 1fr auto 1fr; padding-bottom: 2px; align-items: center; }
.qat { display: flex; align-items: center; padding-left: 22px; height: 32px; }
.q-undo { margin-left: 14px; }
.q-redo { margin-left: 11px; }
.q-more { margin-left: 19px; }
.win-tools { display: flex; justify-content: flex-end; align-items: center; }
.signin { width: 58px; height: 19px; background: #fff; color: #2b579a; margin-right: 10px; }
.win-btn { width: 46px; height: 30px; }

.tabs { height: 30px; flex: none; background: #2b579a; color: #fff; display: flex; gap: 2px; }
.tab { padding: 0 13px; height: 30px; }
.tab.file { width: 59px; }
.tab.active { background: #f3f3f3; color: #2b579a; width: 58px; padding: 0; }
.tab.tell { gap: 14px; padding-left: 14px; }
.share { margin-left: auto; padding-right: 24px; gap: 4px; }

.ribbon { height: 93px; flex: none; background: #f3f3f3; border-bottom: 1px solid #c6c6c6; display: flex; }
.rule { width: 1px; flex: none; background: #b5b5b5; margin: 4px 0; }
.group { display: flex; flex-direction: column; flex: none; }
.clipboard { width: 164px; }
.font { width: 269px; }
.para { width: 284px; }
.styles { flex: 1; }
.editing { width: 85px; }
.adobe { width: 169px; }
.group-body { height: 76px; display: flex; }
.group-body.stack { flex-direction: column; gap: 8px; padding: 11px 0 0 8px; }
.group-foot { height: 16px; display: flex; align-items: center; }
.group-foot span { flex: 1; text-align: center; }
.launch { width: 16px; padding-left: 2px; }
.paste { flex-direction: column; width: 46px; margin-left: 6px; padding-top: 8px; justify-content: flex-start; }
.paste svg { margin-left: 4px; }
.paste span { line-height: 20px; }
.paste .caret { margin-top: 3px; }
.small-col { display: flex; flex-direction: column; padding-top: 3px; }
.small { height: 23px; justify-content: flex-start; gap: 4px; }
.small.off { color: #a6a6a6; }
.small .far { margin-left: 6px; }
.tool-row { display: flex; height: 23px; align-items: stretch; }
.combo { position: relative; display: flex; height: 23px; }
.combo select { appearance: none; width: 100%; height: 23px; margin: 0; border: 1px solid #ababab; border-radius: 0; background: #fff; font: inherit; font-size: 11px; color: #262626; padding: 0 2px; }
.combo .caret { position: absolute; right: 4px; top: 10px; pointer-events: none; }
.combo.name { width: 94px; }
.combo.size { width: 43px; }
.t { color: #5f5f5f; }
.t.on { background: #c8c8c8; }
.w8 { width: 8px; } .w10 { width: 10px; } .w12 { width: 12px; } .w18 { width: 18px; } .w20 { width: 20px; }
.w22 { width: 22px; } .w24 { width: 24px; } .w26 { width: 26px; } .w28 { width: 28px; } .w36 { width: 36px; }
.vsep { width: 6px; flex: none; display: flex; justify-content: center; }
.vsep.wide { width: 12px; }
.vsep::before { content: ""; width: 1px; background: #d0d0d0; }
.grow { font-size: 14px; font-weight: 600; }
.shrink { font-size: 12px; font-weight: 600; }
.grow svg, .shrink svg { align-self: flex-start; margin-top: 4px; }
.case { font-size: 13px; gap: 4px; }
.bold { font-size: 13px; font-weight: 700; color: #444; }
.ital { font: italic 700 14px "Liberation Serif", serif; }
.under { font-size: 13px; font-weight: 600; text-decoration: underline; text-underline-offset: 2px; }
.strike { font-size: 10px; font-weight: 600; text-decoration: line-through; }
.subs { font-size: 13px; font-weight: 700; }
.subs sub, .subs sup { font-size: 8px; color: #2e75b6; line-height: 8px; }
.subs sub { align-self: flex-end; margin-bottom: 3px; }
.subs sup { align-self: flex-start; margin-top: 3px; }
.effect { font-size: 17px; font-weight: 600; color: #fff; -webkit-text-stroke: 1px #2e75b6; text-shadow: 0 0 3px #9dc3e6; }
.colour { font-size: 14px; font-weight: 600; padding-bottom: 3px; position: relative; }
.colour::after { content: ""; position: absolute; left: 5px; bottom: 4px; width: 16px; height: 4px; background: #f00; }
.pil { font-size: 12px; font-weight: 600; gap: 1px; }
.pilcrow { font-size: 17px; }

.gallery { margin: 6px 0 0 9px; height: 60px; border: 1px solid #c6c6c6; background: #fff; display: flex; align-self: flex-start; }
.style-item { width: 72px; height: 56px; margin-top: 1px; flex-direction: column; justify-content: flex-start; border: 4px solid transparent; padding: 2px 0 0; }
.style-item.picked { border-color: #c6c6c6; }
.sample { width: 58px; height: 26px; line-height: 30px; overflow: hidden; text-align: left; font-size: 13px; color: #000; }
.sample.h1 { font-size: 18px; font-weight: 300; color: #2f5496; }
.sample.h2 { font-size: 15px; font-weight: 300; color: #2f5496; }
.sample.title { font-size: 32px; font-weight: 300; line-height: 18px; }
.sample.subtitle { color: #5a5a5a; font-size: 14px; font-weight: 300; }
.sample.subtle { font-style: italic; color: #404040; }
.sample.emphasis { font-style: italic; }
.sample.intense { font-style: italic; color: #4472c4; }
.sample.strong { font-weight: 700; font-size: 12px; }
.sample.quote { border-top: 1px solid #4472c4; border-bottom: 1px solid #4472c4; height: 20px; line-height: 20px; margin: 4px 0 2px; }
.style-name { color: #5f5f5f; line-height: 16px; margin-top: 4px; }
.gallery-nav { width: 14px; border-left: 1px solid #c6c6c6; display: flex; flex-direction: column; }
.gallery-nav button { height: 19px; }
.gallery-nav button + button { border-top: 1px solid #c6c6c6; height: 20px; }
.gallery-nav .dim { background: #e1e1e1; opacity: 0.6; }
.gallery-nav .more { flex-direction: column; }
.gallery-nav .more::before { content: ""; width: 7px; height: 1px; background: #6a6a6a; margin-bottom: 3px; }
.editing .small-col { margin-left: 10px; }
.editing .near { margin-left: -1px; }
.big { flex-direction: column; justify-content: flex-start; text-align: center; }
.big svg { margin: 8px 0 5px; height: 28px; }
.create { width: 109px; }
.request { width: 44px; }
.collapse { width: 25px; align-self: flex-end; margin-left: 18px; height: 14px; }

.workspace { flex: 1; min-height: 0; display: flex; background: #e6e6e6; overflow: hidden; }
.pages { flex: 1; display: flex; justify-content: center; gap: 17px; }
.page { width: 816px; flex: none; background: #fff; border: 1px solid #c6c6c6; border-width: 0 1px; padding: 67px 95px 0; overflow: hidden; display: flex; flex-direction: column; align-items: center; }
.stat-frame { width: 468px; height: 67px; border: 1px solid #000; padding: 1px 0 0 5px; overflow: hidden; }
.stat-frame.second { margin-top: 1px; padding-top: 2px; }
.stat { border-collapse: collapse; table-layout: fixed; width: 456px; font: 12px/15px "Liberation Sans", Arial, sans-serif; color: #111; border-left: 2px solid #b9d3e6; border-right: 2px solid #b9d3e6; }
.second .stat { border-top: 2px solid #b9cfdf; }
.c1 { width: 62px; } .c2 { width: 160px; } .c3 { width: 93px; } .c4 { width: 68px; } .c5 { width: 73px; }
.stat tr { height: 20px; }
.stat tr.sliver { height: 10px; }
.stat th { background: #e1e0e4; text-align: left; padding: 0 0 0 5px; border: 1px solid #bccde2; vertical-align: middle; }
.stat th.ci { vertical-align: top; padding-top: 1px; }
.stat th.var { vertical-align: top; font: 700 10px/18px "DejaVu Sans Condensed", "DejaVu Sans", sans-serif; text-align: start; padding: 0 10px 0 0; border-right: 2px solid #b9d3e6; }
.stat td { text-align: right; padding: 0 12px 0 0; border: 1px solid #b9cfe6; }
.fa { align-self: stretch; margin: 0; font-size: 16px; line-height: 28px; color: #002060; font-family: "Open Sans", "DejaVu Sans Condensed", "DejaVu Sans", sans-serif; }
.line { display: block; white-space: nowrap; }
.fa.first { margin-top: 22px; }
.fa.after { margin-top: 26px; }
.fa.last { margin-top: 27px; }
.tests { display: flex; gap: 1px; margin-top: 24px; }
.test { width: 225px; height: 153px; border: 1px solid #000; padding: 26px 0 0 14px; color: #333; }
.test + .test { width: 220px; }
.test h2 { margin: 0 0 7px; font-size: 14px; line-height: 24px; font-weight: 600; color: #0072bc; }
.test dl { display: grid; grid-template-columns: 122px 1fr; margin: 0 0 8px; padding-left: 2px; line-height: 18px; }
.test dd { margin: 0; white-space: nowrap; }
.tp { border-collapse: collapse; line-height: 18px; }
.tp th { font-size: 12px; font-weight: 400; color: #111; border-bottom: 1px solid #333; padding: 0 4px 0 2px; line-height: 16px; }
.tp td { text-align: right; padding: 2px 3px 0 0; }
.chart { margin: 0; width: 428px; border: 1px solid #000; }
.chart.fat { width: 427px; }
.chart svg { width: 100%; }
.c-title { font-size: 12px; fill: #505050; }
.c-tick { font-size: 8px; font-weight: 600; fill: #444; }
.c-ref { font-size: 7px; font-weight: 600; fill: #333; }
.c-axis { font-size: 9px; font-weight: 600; fill: #555; }

.scroll { width: 17px; flex: none; padding: 2px 2px 2px 1px; display: flex; flex-direction: column; }
.scroll button { height: 14px; background: #fff; border: 1px solid #ababab; }
.track { flex: 1; background: #dadada; padding-top: 308px; }
.thumb { height: 34px; background: #fff; border: 1px solid #ababab; }

.status { height: 22px; flex: none; background: #f3f3f3; border-top: 1px solid #c6c6c6; display: flex; align-items: center; color: #444; padding: 0 7px 0 8px; }
.status > span { padding-bottom: 2px; }
.s-page { width: 88px; }
.s-words { width: 78px; }
.s-proof { margin-right: 17px; }
.views { margin-left: auto; display: flex; align-self: stretch; }
.views button { width: 40px; }
.views .sel { background: #c8c8c8; }
.zoom-btn { width: 18px; height: 20px; }
.zoom { appearance: none; width: 100px; height: 11px; margin: 0; background: linear-gradient(#a6a6a6, #a6a6a6) center / 100% 1px no-repeat; }
.zoom::-webkit-slider-thumb { appearance: none; width: 5px; height: 11px; background: #666; border-radius: 0; }
.pct { width: 40px; text-align: right; }

.taskbar { height: 40px; flex: none; display: flex; background: linear-gradient(90deg, #343538, #404346 30%, #43474a); color: #fff; }
.start { width: 48px; }
.search { width: 344px; background: #f2f2f2; border: 1px solid #b8b8b8; display: flex; align-items: center; padding-left: 11px; gap: 12px; }
.search input { flex: 1; min-width: 0; border: 0; background: none; font: 14px/20px "Open Sans", sans-serif; color: #222; padding: 0; outline: 0; }
.search input::placeholder { color: #333; opacity: 1; }
.app { width: 48px; margin-right: 1px; position: relative; }
.app.view { width: 47px; margin-right: 4px; }
.app.open::after { content: ""; position: absolute; left: 4px; right: 4px; bottom: 0; height: 2px; background: #bba98c; }
.app.multi::after { background: linear-gradient(90deg, #bba98c 31px, #8b8172 31px); }
.app.current { background: #686c6f; }
.app.current::after { left: 0; right: 0; }
.tray { margin-left: auto; display: flex; align-items: stretch; }
.tray button { width: 24px; }
.tray .lang { width: 36px; font-size: 12px; }
.tray .clock { width: 63px; flex-direction: column; align-items: flex-end; padding-right: 5px; font-size: 11px; line-height: 17px; }
.tray .notes { width: 49px; padding-left: 1px; }
.peek { width: 5px; border-left: 1px solid #8d8f90; }
</style>
